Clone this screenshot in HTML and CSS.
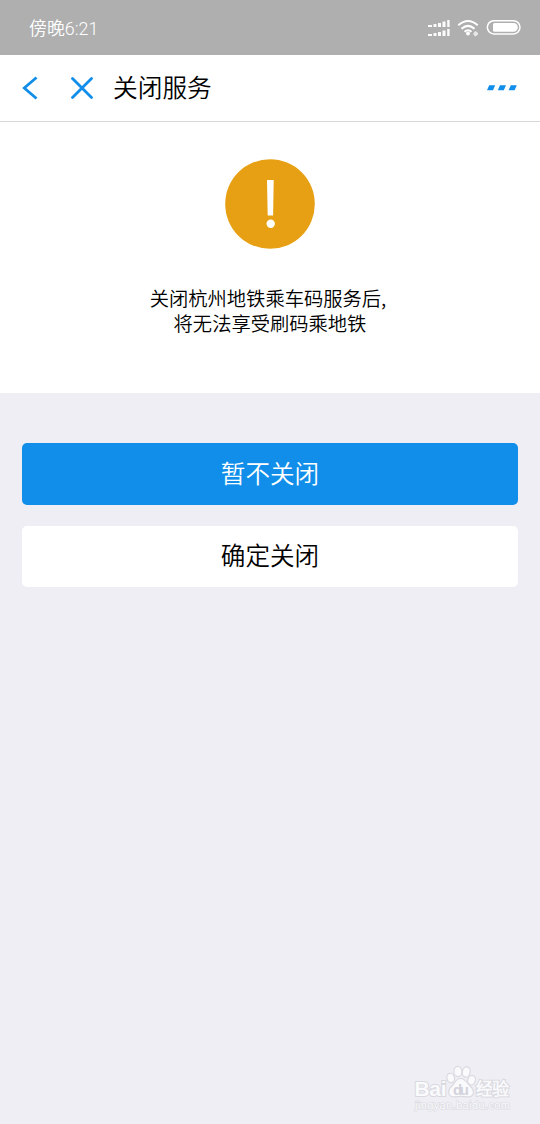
FILE: index.html
```html
<!DOCTYPE html>
<html lang="zh-CN">
<head>
<meta charset="utf-8">
<title>关闭服务</title>
<link rel="stylesheet" href="styles.css">
</head>
<body>
<div class="status-bar">
  <span class="status-time">傍晚6:21</span>
  <svg class="status-icons" width="94" height="22" viewBox="0 0 94 22" fill="#fff">
    <path d="M0 8h4v-2h-4zM5.500 8h3v-3H5.500zM10 8h3v-4h-3zM14.500 8h3v-5.500H14.500zM19.200 8h2.400v-7h-2.400z" opacity=".95"/>
    <path d="M0 17h4v-2h-4zM5.500 17h3v-3H5.500zM10 17h3v-4h-3zM14.500 17h3v-5.500H14.500zM19.200 17h2.400v-7h-2.400z" opacity=".95"/>
    <g fill="none" stroke="#fff" stroke-width="2">
      <path d="M30.300 6.300Q40 -2.200 49.700 6.300"/>
      <path d="M33.500 9.700Q40 4 46.500 9.700"/>
      <path d="M36.500 12.700Q40 9.700 43.500 12.700"/>
    </g>
    <circle cx="40" cy="14.500" r="1.900"/>
    <path d="M47.500 12l2.500 2v1.500l-2.500 2-2-1.500V14z" opacity=".7"/>
    <rect x="59.300" y="1.700" width="32.700" height="13.200" rx="6.600" fill="none" stroke="#fff" stroke-width="1.500"/>
    <path d="M66.500 4H85.500a4.300 4.300 0 0 1 0 8.700H66.500q-1.500 0-1.500-1.500V5.500Q65 4 66.500 4z"/>
  </svg>
</div>
<header class="nav-bar">
  <svg class="nav-back" width="16" height="24" viewBox="0 0 16 24"><path d="M14.500 1.500L2.300 12L14.500 22.500"/></svg>
  <svg class="nav-close" width="22" height="22" viewBox="0 0 22 22"><path d="M1.500 1.500L20.500 20.500M20.500 1.500L1.500 20.500"/></svg>
  <h1 class="nav-title">关闭服务</h1>
  <svg class="nav-more" width="30" height="6" viewBox="0 0 30 6"><path d="M2.200 .3h6L6 5.200H0zM13 .3h6L16.800 5.200H10.800zM23.800 .3h6L27.600 5.200H21.600z"/></svg>
</header>
<main>
  <section class="notice">
    <svg class="notice-icon" width="90" height="90" viewBox="0 0 90 90"><circle cx="45" cy="45" r="44.800" fill="#e7a013"/><path d="M42 21h6.700l-.6 35.500h-5.400z" fill="#fff"/><circle cx="45.700" cy="64.700" r="4.200" fill="#fff"/></svg>
    <div class="notice-text">
      <p class="notice-line notice-line-first">关闭杭州地铁乘车码服务后,</p>
      <p class="notice-line">将无法享受刷码乘地铁</p>
    </div>
  </section>
  <div class="actions">
    <button class="btn btn-primary">暂不关闭</button>
    <button class="btn btn-plain">确定关闭</button>
  </div>
</main>
<svg class="watermark" width="104" height="52" viewBox="0 0 104 52">
  <g fill="#fafafc" stroke="#d9d9e0" stroke-width="1.200">
    <ellipse cx="40.700" cy="16" rx="3.800" ry="4.800" transform="rotate(-15 40.700 16)"/>
    <ellipse cx="47.900" cy="9.500" rx="4" ry="5.200"/>
    <ellipse cx="56.200" cy="10" rx="3.900" ry="5.200" transform="rotate(12 56.200 10)"/>
    <ellipse cx="61.600" cy="18.200" rx="3.800" ry="4.800" transform="rotate(15 61.600 18.200)"/>
    <path d="M50.500 16.500C46 16.500 45 21 41.500 24.500C36.500 29 38.500 35.500 45 34.800Q51 33.800 57 34.800C64 35.500 65.500 29 60.500 24.500C57 21 55.500 16.500 50.500 16.500z"/>
    <text x="4.500" y="33.500" class="wm-text wm-logo" textLength="32">Bai</text>
    <text x="66" y="32.500" class="wm-text wm-cn" textLength="33">经验</text>
    <text x="5" y="46.500" class="wm-text wm-url" textLength="95">jingyan.baidu.com</text>
  </g>
  <text x="43" y="32.500" class="wm-du" textLength="16" fill="#d3d3dc">du</text>
</svg>
</body>
</html>
```
FILE: styles.css
```css
* { box-sizing: border-box; }

body {
  margin: 0;
  min-height: 1124px;
  background: #efeef4;
  color: #000;
  font-family: "Noto Sans CJK SC DemiLight", "Noto Sans CJK SC", sans-serif;
  font-weight: 350;
}

.status-bar {
  display: flex;
  align-items: center;
  justify-content: space-between;
  height: 55px;
  padding: 0 18px 0 29px;
  background: #afafaf;
  color: #fff;
}

.status-time {
  padding-top: 3px;
  font-family: Roboto, "Noto Sans CJK SC", sans-serif;
  font-size: 17.9px;
  line-height: 24px;
}

.status-icons { margin-top: 5px; }

.nav-bar {
  display: flex;
  align-items: center;
  height: 67px;
  padding: 0 23px 0 22px;
  border-bottom: 1px solid #d8d8d8;
  background: #fff;
}

.nav-back, .nav-close {
  fill: none;
  stroke: #108ee9;
  stroke-width: 2.8;
}

.nav-close { margin-left: 33px; stroke-linecap: round; }

.nav-title {
  margin: 0 auto 0 20px;
  padding-bottom: 4px;
  font-size: 24.7px;
  font-weight: 350;
  line-height: 36px;
}

.nav-more { fill: #108ee9; }

.notice {
  display: flex;
  flex-direction: column;
  align-items: center;
  height: 271px;
  padding-top: 37px;
  background: #fff;
}

.notice-text {
  display: flex;
  flex-direction: column;
  align-items: center;
  margin-top: 37px;
}

.notice-line {
  margin: 0;
  font-size: 19.3px;
  line-height: 24.5px;
}

.notice-line-first { padding-right: 4px; }

.actions {
  display: flex;
  flex-direction: column;
  gap: 21px;
  padding: 50px 22px 0;
}

.btn {
  height: 61.500px;
  padding: 0 0 4px;
  border: 0;
  border-radius: 5px;
  font-family: inherit;
  font-size: 24.6px;
  font-weight: 350;
  line-height: 36px;
}

.btn-primary { background: #108ee9; color: #fff; }
.btn-plain { background: #fff; color: #000; }

.watermark {
  position: absolute;
  left: 410px;
  top: 1062px;
}

.wm-text { paint-order: stroke; }
.wm-logo, .wm-du { font-family: "Liberation Sans", sans-serif; font-weight: 700; }
.wm-logo { font-size: 21px; stroke-width: 2px; }
.wm-du { font-size: 15px; }
.wm-cn { font-size: 17px; font-weight: 700; stroke-width: 2px; }
.wm-url { font-family: "Liberation Sans", sans-serif; font-size: 11px; font-weight: 400; }
```
